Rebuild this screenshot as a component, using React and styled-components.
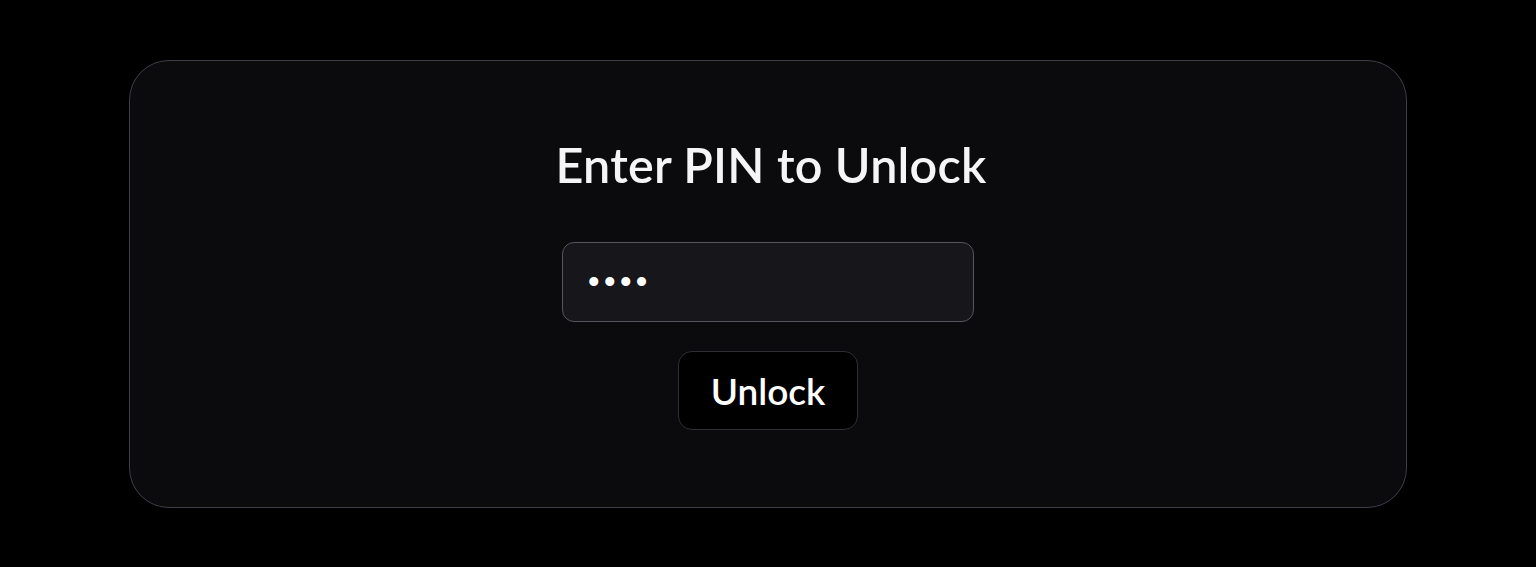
import React from "react";
import styled, { createGlobalStyle } from "styled-components";

const GlobalStyle = createGlobalStyle`
  html, body {
    margin: 0;
    padding: 0;
    background: #000;
  }
  body {
    font-family: "Lato", "Noto Sans", sans-serif;
    color: #fff;
  }
`;

const Page = styled.div`
  padding: 60px 129px;
  box-sizing: border-box;
`;

const Card = styled.div`
  height: 448px;
  box-sizing: border-box;
  border: 1px solid #3d3d48;
  border-radius: 40px;
  background: #0b0b0e;
  display: flex;
  flex-direction: column;
  align-items: center;
  justify-content: center;
`;

const Title = styled.h1`
  margin: 0 0 51px 6px;
  font-size: 48.5px;
  line-height: 53px;
  font-weight: 600;
  letter-spacing: 0.2px;
  color: #f5f5f7;
`;

const PinInput = styled.input`
  width: 412px;
  height: 80px;
  box-sizing: border-box;
  padding: 0 25px;
  border: 1px solid #55555d;
  border-radius: 12px;
  background: #17171b;
  color: #fff;
  font-family: "Liberation Sans", sans-serif;
  font-size: 33px;
  letter-spacing: 4.4px;
  outline: none;
`;

const Button = styled.button`
  margin-top: 29px;
  height: 79px;
  padding: 0 32px;
  border: 1px solid #2e2e34;
  border-radius: 14px;
  background: #000;
  color: #fff;
  font-family: "Lato", "Noto Sans", sans-serif;
  font-size: 37px;
  font-weight: 600;
  cursor: pointer;
`;

export default function App() {
  return (
    <>
      <GlobalStyle />
      <Page>
        <Card>
          <Title>Enter PIN to Unlock</Title>
          <PinInput type="password" defaultValue="1234" readOnly />
          <Button>Unlock</Button>
        </Card>
      </Page>
    </>
  );
}
